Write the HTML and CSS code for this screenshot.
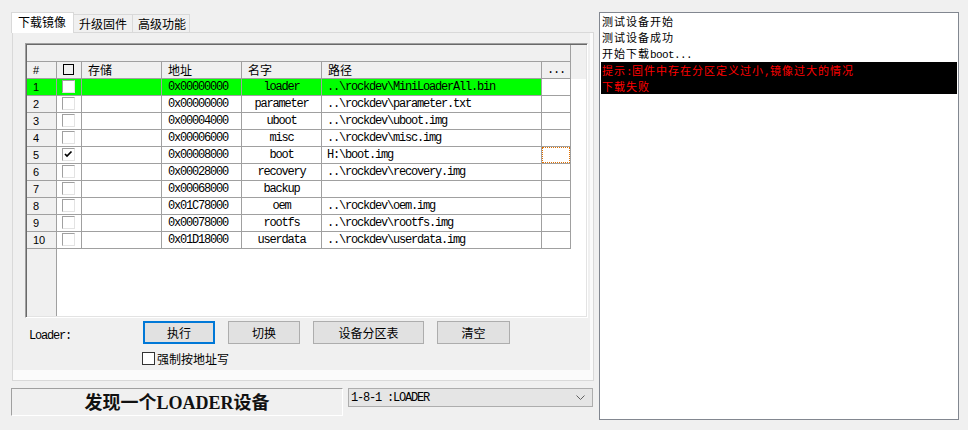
FILE: index.html
```html
<!DOCTYPE html>
<html lang="zh">
<head>
<meta charset="utf-8">
<title>RKDevTool</title>
<link rel="stylesheet" href="styles.css">
</head>
<body>
<div class="app">
  <div class="left">
    <div class="tabs">
      <div class="tab active">下载镜像</div>
      <div class="tab t2">升级固件</div>
      <div class="tab t3">高级功能</div>
    </div>
    <div class="panel">
      <div class="page">
        <div class="list">
          <div class="list-head">
            <div class="blank"></div>
            <div class="grid hrow">
              <div class="num">#</div>
              <div class="chk"><span class="hbox"></span></div>
              <div class="txt">存储</div>
              <div class="txt">地址</div>
              <div class="txt">名字</div>
              <div class="txt">路径</div>
              <div class="dots m">...</div>
            </div>
          </div>
          <div class="list-body">
            <div class="grid row sel">
              <div class="num">1</div>
              <div class="chk"><span class="cb"></span></div>
              <div></div>
              <div class="addr m">0x00000000</div>
              <div class="name m">loader</div>
              <div class="path m">..\rockdev\MiniLoaderAll.bin</div>
              <div class="dc"></div>
            </div>
            <div class="grid row">
              <div class="num">2</div>
              <div class="chk"><span class="cb"></span></div>
              <div></div>
              <div class="addr m">0x00000000</div>
              <div class="name m">parameter</div>
              <div class="path m">..\rockdev\parameter.txt</div>
              <div class="dc"></div>
            </div>
            <div class="grid row">
              <div class="num">3</div>
              <div class="chk"><span class="cb"></span></div>
              <div></div>
              <div class="addr m">0x00004000</div>
              <div class="name m">uboot</div>
              <div class="path m">..\rockdev\uboot.img</div>
              <div class="dc"></div>
            </div>
            <div class="grid row">
              <div class="num">4</div>
              <div class="chk"><span class="cb"></span></div>
              <div></div>
              <div class="addr m">0x00006000</div>
              <div class="name m">misc</div>
              <div class="path m">..\rockdev\misc.img</div>
              <div class="dc"></div>
            </div>
            <div class="grid row">
              <div class="num">5</div>
              <div class="chk"><span class="cb"><svg width="11" height="11" viewBox="0 0 11 11"><path d="M2 5 L4 7 L8.5 2.5" fill="none" stroke="#000" stroke-width="1.7"/></svg></span></div>
              <div></div>
              <div class="addr m">0x00008000</div>
              <div class="name m">boot</div>
              <div class="path m">H:\boot.img</div>
              <div class="dc"><span class="focus"></span></div>
            </div>
            <div class="grid row">
              <div class="num">6</div>
              <div class="chk"><span class="cb"></span></div>
              <div></div>
              <div class="addr m">0x00028000</div>
              <div class="name m">recovery</div>
              <div class="path m">..\rockdev\recovery.img</div>
              <div class="dc"></div>
            </div>
            <div class="grid row">
              <div class="num">7</div>
              <div class="chk"><span class="cb"></span></div>
              <div></div>
              <div class="addr m">0x00068000</div>
              <div class="name m">backup</div>
              <div class="path m"></div>
              <div class="dc"></div>
            </div>
            <div class="grid row">
              <div class="num">8</div>
              <div class="chk"><span class="cb"></span></div>
              <div></div>
              <div class="addr m">0x01C78000</div>
              <div class="name m">oem</div>
              <div class="path m">..\rockdev\oem.img</div>
              <div class="dc"></div>
            </div>
            <div class="grid row">
              <div class="num">9</div>
              <div class="chk"><span class="cb"></span></div>
              <div></div>
              <div class="addr m">0x00078000</div>
              <div class="name m">rootfs</div>
              <div class="path m">..\rockdev\rootfs.img</div>
              <div class="dc"></div>
            </div>
            <div class="grid row">
              <div class="num">10</div>
              <div class="chk"><span class="cb"></span></div>
              <div></div>
              <div class="addr m">0x01D18000</div>
              <div class="name m">userdata</div>
              <div class="path m">..\rockdev\userdata.img</div>
              <div class="dc"></div>
            </div>
          </div>
        </div>
        <div class="ctrl-row">
          <span class="loader-label m">Loader:</span>
          <button class="btn focused w72">执行</button>
          <button class="btn w72">切换</button>
          <button class="btn w111">设备分区表</button>
          <button class="btn w73">清空</button>
        </div>
        <div class="force"><span class="fbox"></span><span>强制按地址写</span></div>
      </div>
    </div>
    <div class="status-row">
      <div class="status">发现一个<span class="lat">LOADER</span>设备</div>
      <div class="combo"><span class="m">1-8-1 :LOADER</span><svg width="9" height="5" viewBox="0 0 9 5"><path d="M0.5 0.5 L4.5 4.5 L8.5 0.5" fill="none" stroke="#606060" stroke-width="1"/></svg></div>
    </div>
  </div>
  <div class="log">
    <div class="line">测试设备开始</div>
    <div class="line">测试设备成功</div>
    <div class="line">开始下载<span class="m">boot...</span></div>
    <div class="err">
      <div class="line">提示<span class="m">:</span>固件中存在分区定义过小<span class="m">,</span>镜像过大的情况</div>
      <div class="line">下载失败</div>
    </div>
  </div>
</div>
</body>
</html>
```

FILE: styles.css
```css
html, body {
  margin: 0;
  padding: 0;
}
body {
  background: #f0f0f0;
  font-family: "Noto Sans CJK SC", sans-serif;
  font-size: 12px;
  color: #000;
}
.m {
  font-family: "Liberation Mono", monospace;
  font-size: 12px;
  letter-spacing: -1.2px;
}
.app {
  display: flex;
  width: 968px;
  height: 430px;
  box-sizing: border-box;
  padding: 12px 0 0 11px;
  overflow: hidden;
}
.left {
  width: 583px;
  display: flex;
  flex-direction: column;
}
/* tabs */
.tabs {
  display: flex;
  align-items: flex-end;
  height: 20px;
}
.tab {
  height: 18px;
  box-sizing: border-box;
  border-top: 1px solid #d9d9d9;
  border-right: 1px solid #d9d9d9;
  background: #f0f0f0;
  line-height: 17px;
  padding-left: 5px;
}
.tab.active {
  height: 21px;
  width: 63px;
  margin-bottom: -1px;
  position: relative;
  z-index: 1;
  background: #fff;
  border-left: 1px solid #d9d9d9;
  padding-left: 6px;
  line-height: 18px;
}
.tab.t2 { width: 59px; }
.tab.t3 { width: 57px; }
/* panel */
.panel {
  margin-left: 1px;
  width: 582px;
  height: 349px;
  box-sizing: border-box;
  border: 1px solid #d9d9d9;
  background: #fbfbfb;
}
.page {
  width: 577px;
  height: 337px;
  box-sizing: border-box;
  padding: 10px 0 0 12px;
  background: #f0f0f0;
}
/* list */
.list {
  width: 563px;
  height: 275px;
  box-sizing: border-box;
  border: 1px solid;
  border-color: #a0a0a0 #ffffff #ffffff #a0a0a0;
  box-shadow: inset 1px 1px 0 #696969, inset -1px -1px 0 #e3e3e3;
  padding: 1px;
  display: flex;
  flex-direction: column;
}
.list-head {
  background: #f0f0f0;
}
.blank {
  width: 544px;
  height: 17px;
  box-sizing: border-box;
  border-right: 1px solid #a0a0a0;
  border-bottom: 1px solid #a0a0a0;
}
.grid {
  display: grid;
  grid-template-columns: 30px 25px 80px 80px 80px 220px 29px;
  width: 544px;
}
.grid > div {
  height: 17px;
  box-sizing: border-box;
  border-right: 1px solid #a0a0a0;
  border-bottom: 1px solid #a0a0a0;
  line-height: 16px;
  white-space: nowrap;
  overflow: hidden;
}
.list-body {
  flex: 1;
  background: linear-gradient(to right, #f0f0f0 0 29px, #a0a0a0 29px 30px, #ffffff 30px);
}
.row > div {
  background: #fff;
}
.row > .num {
  background: #f0f0f0;
}
.row.sel > div {
  background: #00ff00;
}
.row.sel > .dc {
  background: #fff;
}
.num {
  font-family: "Liberation Sans", sans-serif;
  font-size: 11px;
  padding-left: 6px;
}
.txt {
  padding-left: 6px;
}
.hrow .dots {
  text-align: center;
}
.hbox {
  display: block;
  width: 11px;
  height: 11px;
  box-sizing: border-box;
  border: 1px solid #000;
  margin: 2px 0 0 6px;
}
.cb {
  display: block;
  width: 13px;
  height: 13px;
  box-sizing: border-box;
  margin: 1px 0 0 5px;
  background: #fff;
  border: 1px solid;
  border-color: #a0a0a0 #e3e3e3 #e3e3e3 #a0a0a0;
}
.cb svg {
  display: block;
}
.addr {
  padding-left: 6px;
}
.name {
  text-align: center;
}
.path {
  padding-left: 5px;
}
.focus {
  display: block;
  height: 16px;
  box-sizing: border-box;
  border: 1px dotted #e07000;
}
/* controls */
.ctrl-row {
  display: flex;
  margin-top: 3px;
  height: 23px;
  gap: 13px;
}
.loader-label {
  width: 101px;
  margin-left: 4px;
  padding-top: 7px;
  line-height: 16px;
}
.btn {
  height: 23px;
  box-sizing: border-box;
  margin: 0;
  padding: 0;
  background: #e1e1e1;
  border: 1px solid #adadad;
  font-family: "Noto Sans CJK SC", sans-serif;
  font-size: 12px;
  color: #000;
  line-height: 20px;
}
.btn.focused {
  border: 2px solid #0078d7;
}
.w72 { width: 72px; }
.w73 { width: 73px; }
.w111 { width: 111px; }
.force {
  display: flex;
  align-items: center;
  margin: 8px 0 0 117px;
  height: 13px;
  font-size: 12px;
}
.fbox {
  width: 13px;
  height: 13px;
  box-sizing: border-box;
  border: 1px solid #333;
  background: #fff;
  margin-right: 2px;
}
/* status row */
.status-row {
  display: flex;
  align-items: flex-start;
  margin-top: 7px;
}
.status {
  width: 332px;
  height: 28px;
  box-sizing: border-box;
  border: 1px solid;
  border-color: #a0a0a0 #ffffff #ffffff #a0a0a0;
  text-align: center;
  font-size: 18px;
  font-weight: 700;
  line-height: 25px;
  color: #111;
}
.lat {
  font-family: "Liberation Serif", serif;
  font-weight: 700;
}
.combo {
  margin-left: 5px;
  width: 245px;
  height: 19px;
  box-sizing: border-box;
  border: 1px solid #adadad;
  background: #e5e5e5;
  display: flex;
  align-items: center;
  justify-content: space-between;
  padding: 0 7px 0 2px;
  line-height: 16px;
}
/* log */
.log {
  margin-left: 5px;
  width: 360px;
  height: 408px;
  box-sizing: border-box;
  border: 1px solid #828790;
  background: #fff;
  padding: 0 1px;
  font-size: 11px;
  letter-spacing: 1px;
}
.log .m {
  font-size: 11px;
  letter-spacing: -0.6px;
}
.line {
  height: 16px;
  line-height: 16px;
  padding-left: 1px;
  white-space: nowrap;
}
.err {
  background: #000;
  color: #ff0000;
  margin-top: 1px;
}
```
